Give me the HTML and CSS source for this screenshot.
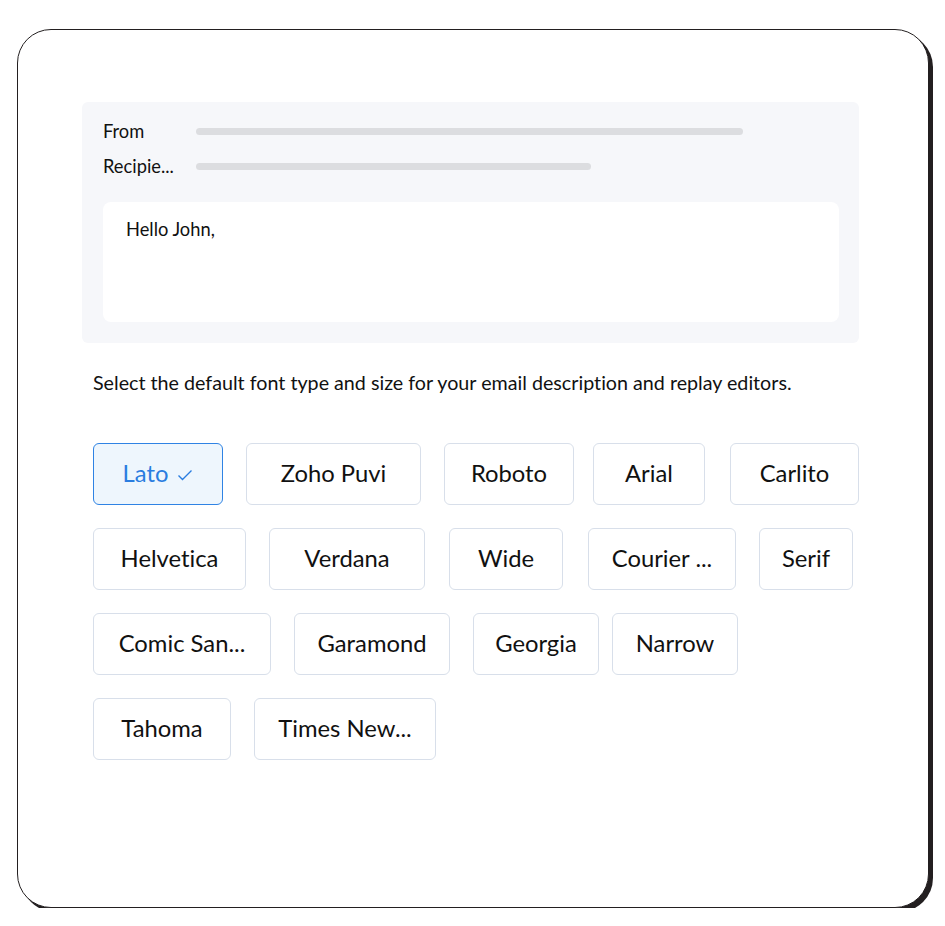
FILE: index.html
```html
<!DOCTYPE html>
<html lang="en">
<head>
    <meta charset="UTF-8">
    <meta name="viewport" content="width=device-width, initial-scale=1.0">
    <title>Default Font - Mail Settings</title>
    <link rel="stylesheet" href="styles.css">
</head>
<body>
    <div class="card">
        <!-- Email preview -->
        <div class="preview">
            <div class="preview-row">
                <span class="preview-label">From</span>
                <span class="preview-bar preview-bar--long"></span>
            </div>
            <div class="preview-row">
                <span class="preview-label">Recipie...</span>
                <span class="preview-bar preview-bar--short"></span>
            </div>
            <div class="preview-body">Hello John,</div>
        </div>

        <!-- Font picker -->
        <div class="fonts">
            <p class="fonts-hint">Select the default font type and size for your email description and replay editors.</p>

            <div class="font-list">
                <button class="font-chip font-chip--selected font-lato" type="button">
                    Lato
                    <svg class="check" width="16" height="12" viewBox="0 0 16 12">
                        <path d="M1.5 6.5 L5.5 10.5 L14.5 1.5" fill="none" stroke="currentColor" stroke-width="1.4"/>
                    </svg>
                </button>
                <button class="font-chip font-zoho" type="button">Zoho Puvi</button>
                <button class="font-chip font-roboto" type="button">Roboto</button>
                <button class="font-chip font-arial" type="button">Arial</button>
                <button class="font-chip font-carlito" type="button">Carlito</button>

                <button class="font-chip font-helvetica" type="button">Helvetica</button>
                <button class="font-chip font-verdana" type="button">Verdana</button>
                <button class="font-chip font-wide" type="button">Wide</button>
                <button class="font-chip font-courier" type="button">Courier ...</button>
                <button class="font-chip font-serif" type="button">Serif</button>

                <button class="font-chip font-comic" type="button">Comic San...</button>
                <button class="font-chip font-garamond" type="button">Garamond</button>
                <button class="font-chip font-georgia" type="button">Georgia</button>
                <button class="font-chip font-narrow" type="button">Narrow</button>

                <button class="font-chip font-tahoma" type="button">Tahoma</button>
                <button class="font-chip font-times" type="button">Times New...</button>
            </div>
        </div>
    </div>
</body>
</html>
```

FILE: styles.css
```css
/* General Styles */
body {
    margin: 0;
    padding: 0;
    background-color: #fff;
    font-family: Lato, "Open Sans", sans-serif;
    font-variant-ligatures: none;
    color: #111;
}

.card {
    box-sizing: border-box;
    width: 912px;
    height: 879px;
    margin: 29px 0 0 17px;
    padding: 72px 0 0 64px;
    background-color: #fff;
    border: 1px solid #231f20;
    border-radius: 34px;
    box-shadow: 4px 4px 0 #231f20;
}

/* Email preview */
.preview {
    box-sizing: border-box;
    width: 777px;
    padding: 17px 20px 21px 21px;
    background-color: #f6f7fa;
    border-radius: 6px;
}

.preview-row {
    display: flex;
    align-items: center;
    height: 24px;
    margin-bottom: 11px;
}

.preview-label {
    width: 93px;
    flex-shrink: 0;
    font-size: 18.3px;
}

.preview-bar {
    height: 7px;
    background-color: #dcdde0;
    border-radius: 4px;
}

.preview-bar--long {
    width: 547px;
}

.preview-bar--short {
    width: 395px;
}

.preview-body {
    box-sizing: border-box;
    height: 120px;
    margin-top: 24px;
    padding: 15px 23px;
    background-color: #fff;
    border-radius: 8px;
    font-size: 18.3px;
    line-height: 24px;
}

/* Font picker */
.fonts {
    width: 778px;
    padding-left: 11px;
    box-sizing: border-box;
}

.fonts-hint {
    margin: 28px 0 0;
    font-size: 19.7px;
    line-height: 24px;
    color: #111;
}

.font-list {
    display: flex;
    flex-wrap: wrap;
    gap: 23px;
    margin-top: 48px;
}

.font-chip {
    box-sizing: border-box;
    height: 62px;
    padding: 0 0 2px;
    display: flex;
    align-items: center;
    justify-content: center;
    gap: 9px;
    background-color: #fff;
    border: 1px solid #d8dfea;
    border-radius: 6px;
    font-family: Lato, sans-serif;
    font-variant-ligatures: none;
    font-size: 23.8px;
    color: #111;
    cursor: pointer;
}

.font-chip--selected {
    background-color: #eef6fd;
    border-color: #2f83e4;
    color: #2a7de0;
}

.check {
    margin-top: 4px;
}

.font-lato { width: 130px; }
.font-zoho { width: 175px; }
.font-roboto { width: 130px; }
.font-arial { width: 112px; margin-left: -4px; }
.font-carlito { width: 129px; margin-left: 2px; }
.font-helvetica { width: 153px; }
.font-verdana { width: 156px; }
.font-wide { width: 114px; margin-left: 1px; }
.font-courier { width: 148px; margin-left: 2px; }
.font-serif { width: 94px; }
.font-comic { width: 178px; }
.font-garamond { width: 156px; }
.font-georgia { width: 126px; }
.font-narrow { width: 126px; margin-left: -10px; }
.font-tahoma { width: 138px; }
.font-times { width: 182px; }
```
